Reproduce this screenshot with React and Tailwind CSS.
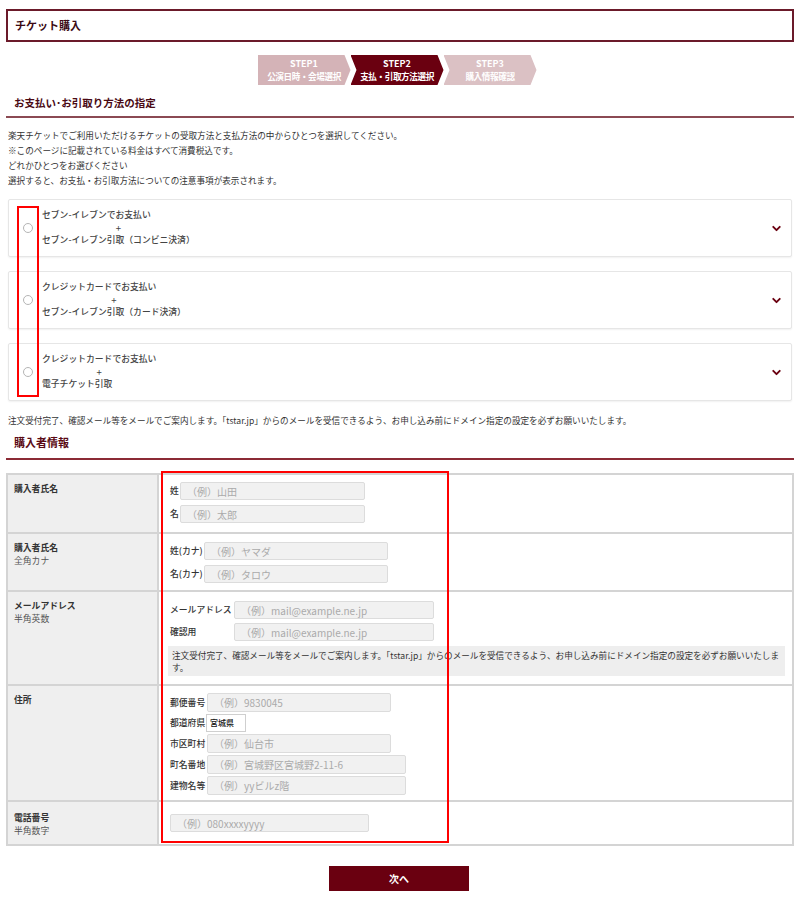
import React from 'react';
import { ChevronDown } from 'lucide-react';

const steps = [
  { no: 'STEP1', label: '公演日時・会場選択', cls: 'bg-[#d4b3b7]', clip: '[clip-path:polygon(0_0,87px_0,93px_50%,87px_100%,0_100%)]' },
  { no: 'STEP2', label: '支払・引取方法選択', cls: 'bg-[#6a0010]', clip: '[clip-path:polygon(0_0,87px_0,93px_50%,87px_100%,0_100%,6px_50%)]' },
  { no: 'STEP3', label: '購入情報確認', cls: 'bg-[#dbc1c4]', clip: '[clip-path:polygon(0_0,87px_0,93px_50%,87px_100%,0_100%,6px_50%)]' },
];

const options = [
  { pay: 'セブン-イレブンでお支払い', get: 'セブン-イレブン引取（コンビニ決済）' },
  { pay: 'クレジットカードでお支払い', get: 'セブン-イレブン引取（カード決済）' },
  { pay: 'クレジットカードでお支払い', get: '電子チケット引取' },
];

const Field = ({ label, labelW, placeholder, inputW, h = 'h-[18px]' }) => (
  <div className="flex items-center">
    <span className={`${labelW} shrink-0 text-[8.8px] font-medium text-[#333]`}>{label}</span>
    <div className={`${inputW} ${h} flex items-center rounded-[2px] border border-[#dcdcdc] bg-[#f1f1f1] pl-[6px] text-[10px] text-[#aaaaaa]`}>
      {placeholder}
    </div>
  </div>
);

const Row = ({ title, sub, children, pt = 'pt-[7px]', last }) => (
  <div className={`grid grid-cols-[151px_1fr] ${last ? '' : 'border-b-2 border-[#d4d4d4]'}`}>
    <div className={`border-r-2 border-[#d4d4d4] bg-[#efefef] pl-[6px] ${pt}`}>
      <div className="text-[8.8px] font-bold leading-[13px] text-[#333]">{title}</div>
      {sub && <div className="text-[8.8px] leading-[14px] text-[#555]">{sub}</div>}
    </div>
    <div className="pl-[11px]">{children}</div>
  </div>
);

const App = () => {
  return (
    <div className="relative min-h-[905px] w-[800px] bg-white px-[6px] pt-[9px] font-['Noto_Sans_CJK_JP',sans-serif] text-[#333]">
      <div className="flex h-[33px] items-center border-2 border-[#6b1a2a] pl-[7px] text-[11px] font-bold text-[#3b0a14]">
        チケット購入
      </div>

      <div className="mt-[13px] flex justify-center pr-[6px]">
        {steps.map((s) => (
          <div
            key={s.no}
            className={`${s.cls} ${s.clip} flex h-[30px] w-[93px] flex-col items-center justify-center text-white`}
          >
            <span className="text-[9px] font-bold leading-[12px]">{s.no}</span>
            <span className="text-[8.6px] font-bold leading-[13px] tracking-[-0.4px]">{s.label}</span>
          </div>
        ))}
      </div>

      <div className="mt-[10px] border-b-2 border-[#8b4a53] pb-[6px] pl-[8px] text-[10.5px] font-bold leading-[15px] text-[#4a0a14]">
        お支払い･お引取り方法の指定
      </div>

      <div className="ml-[2px] mt-[10px] text-[8.6px] leading-[15px] text-[#333]">
        <p>楽天チケットでご利用いただけるチケットの受取方法と支払方法の中からひとつを選択してください。</p>
        <p>※このページに記載されている料金はすべて消費税込です。</p>
        <p>どれかひとつをお選びください</p>
        <p>選択すると、お支払・お引取方法についての注意事項が表示されます。</p>
      </div>

      <div className="mx-[2px] mt-[11px] flex flex-col gap-[14px]">
        {options.map((o, i) => (
          <div
            key={i}
            className="flex h-[58px] items-center rounded-[2px] border border-[#e6e6e6] bg-white pl-[14px] pr-[8px] shadow-[0_1px_2px_rgba(0,0,0,0.06)]"
          >
            <span className="h-[10px] w-[10px] shrink-0 rounded-full border border-[#b5b5b5]" />
            <div className="ml-[9px] inline-flex flex-col text-[8.8px] font-medium leading-[12.5px] text-[#444]">
              <span>{o.pay}</span>
              <span className="text-center text-[9.5px] font-normal">+</span>
              <span>{o.get}</span>
            </div>
            <ChevronDown className="ml-auto text-[#6a0010]" size={13} strokeWidth={3.5} />
          </div>
        ))}
      </div>

      <p className="ml-[2px] mt-[12px] text-[8.6px] leading-[15px] text-[#333]">
        注文受付完了、確認メール等をメールでご案内します。「tstar.jp」からのメールを受信できるよう、お申し込み前にドメイン指定の設定を必ずお願いいたします。
      </p>

      <div className="mt-[6px] border-b-2 border-[#8b2a35] pb-[8px] pl-[8px] text-[11px] font-bold leading-[16px] text-[#5a0a14]">
        購入者情報
      </div>

      <div className="mt-[13px] border-2 border-[#d4d4d4]">
        <Row title="購入者氏名">
          <div className="flex flex-col gap-[5px] pb-[9px] pt-[7px]">
            <Field label="姓" labelW="w-[10px]" inputW="w-[185px]" placeholder="（例）山田" />
            <Field label="名" labelW="w-[10px]" inputW="w-[185px]" placeholder="（例）太郎" />
          </div>
        </Row>
        <Row title="購入者氏名" sub="全角カナ">
          <div className="flex flex-col gap-[5px] pb-[7px] pt-[8px]">
            <Field label="姓(カナ)" labelW="w-[34px]" inputW="w-[184px]" placeholder="（例）ヤマダ" />
            <Field label="名(カナ)" labelW="w-[34px]" inputW="w-[184px]" placeholder="（例）タロウ" />
          </div>
        </Row>
        <Row title="メールアドレス" sub="半角英数">
          <div className="flex flex-col gap-[4px] pb-[8px] pr-[7px] pt-[9px]">
            <Field label="メールアドレス" labelW="w-[64px]" inputW="w-[200px]" placeholder="（例）mail@example.ne.jp" />
            <Field label="確認用" labelW="w-[64px]" inputW="w-[200px]" placeholder="（例）mail@example.ne.jp" />
            <div className="-ml-[2px] mt-[1px] h-[30px] bg-[#eeeeee] px-[4px] pt-[3px] text-[8.6px] leading-[12px] text-[#333]">
              注文受付完了、確認メール等をメールでご案内します。「tstar.jp」からのメールを受信できるよう、お申し込み前にドメイン指定の設定を必ずお願いいたします。
            </div>
          </div>
        </Row>
        <Row title="住所">
          <div className="flex flex-col gap-[2px] pb-[5px] pt-[7px]">
            <Field label="郵便番号" labelW="w-[37px]" inputW="w-[184px]" h="h-[19px]" placeholder="（例）9830045" />
            <div className="flex items-center">
              <span className="w-[36px] shrink-0 text-[8.8px] font-medium text-[#333]">都道府県</span>
              <div className="flex h-[18px] w-[40px] items-center border border-[#cfcfcf] bg-white pl-[3px] text-[8px] font-medium text-[#111]">
                宮城県
              </div>
            </div>
            <Field label="市区町村" labelW="w-[37px]" inputW="w-[184px]" h="h-[19px]" placeholder="（例）仙台市" />
            <Field label="町名番地" labelW="w-[37px]" inputW="w-[199px]" h="h-[19px]" placeholder="（例）宮城野区宮城野2-11-6" />
            <Field label="建物名等" labelW="w-[37px]" inputW="w-[199px]" h="h-[19px]" placeholder="（例）yyビルz階" />
          </div>
        </Row>
        <Row title="電話番号" sub="半角数字" pt="pt-[9px]" last>
          <div className="pb-[12px] pt-[12px]">
            <div className="flex h-[18px] w-[199px] items-center rounded-[2px] border border-[#dcdcdc] bg-[#f1f1f1] pl-[6px] text-[10px] text-[#aaaaaa]">
              （例）080xxxxyyyy
            </div>
          </div>
        </Row>
      </div>

      <div className="mt-[20px] flex justify-center pr-[2px]">
        <button className="h-[25px] w-[140px] bg-[#6a0010] text-[10px] font-bold text-white">次へ</button>
      </div>

      <div className="pointer-events-none absolute left-[17px] top-[206px] h-[191px] w-[22px] border-2 border-[#ff0000]" />
      <div className="pointer-events-none absolute left-[161px] top-[471px] h-[372px] w-[288px] border-2 border-[#ff0000]" />
    </div>
  );
};

export default App;
